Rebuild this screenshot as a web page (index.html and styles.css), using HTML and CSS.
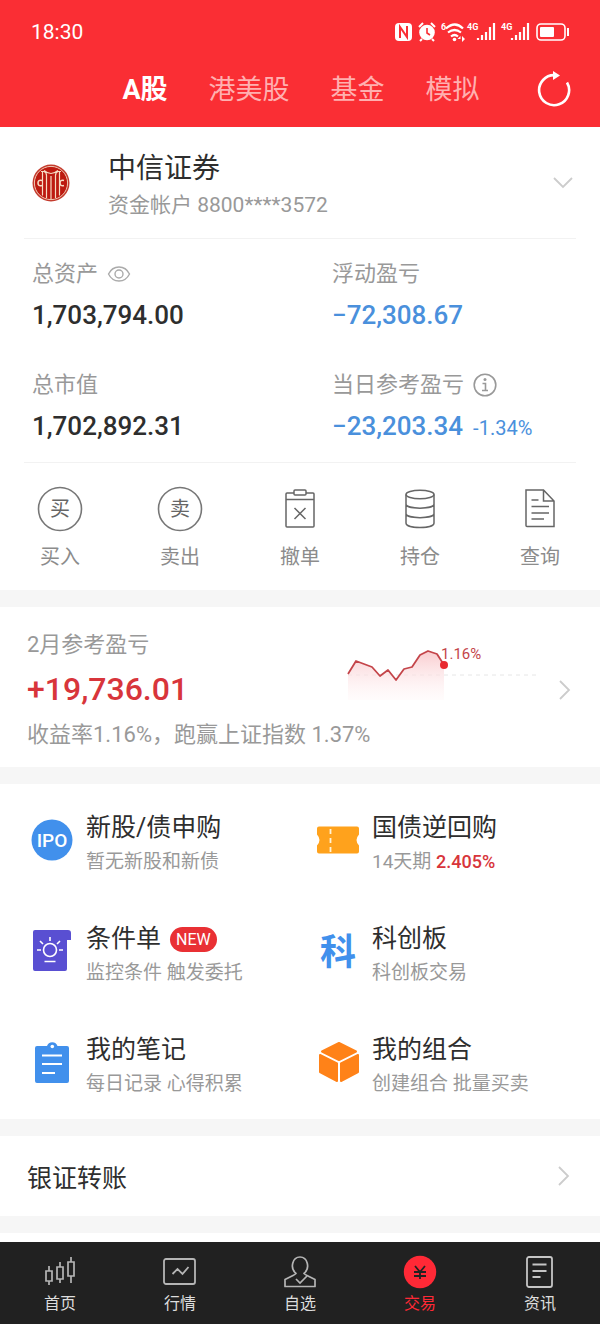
FILE: index.html
```
<!DOCTYPE html>
<html lang="zh-CN">
<head>
<meta charset="utf-8">
<meta name="viewport" content="width=device-width, initial-scale=1">
<title>交易</title>
<link rel="stylesheet" href="styles.css">
</head>
<body>
<header class="header">
  <div class="status">
    <span class="clock">18:30</span>
    <svg class="status-icons" width="178" height="24" viewBox="0 0 178 24" fill="none" stroke="#fff">
      <rect x="2" y="3" width="17" height="18" rx="4" fill="#fff" stroke="none"/>
      <path d="M7 18V7l7 10V6" stroke="#fa2e34" stroke-width="2"/>
      <circle cx="34" cy="12.500" r="7.800" fill="#fff" stroke="none"/>
      <path d="M34 8v5l3 2" stroke="#fa2e34" stroke-width="1.600"/>
      <path d="M26 7l4-4M42 7l-4-4M29 19l-2 2M39 19l2 2" stroke-width="2"/>
      <text class="net" x="48" y="10">6</text>
      <path d="M53 8.500q9-8 17 0M55 12.500q6.500-5 13 0M58 16.500q3.500-3 7 0" stroke-width="2.200"/>
      <circle cx="61.500" cy="19.500" r="1.800" fill="#fff" stroke="none"/>
      <path d="M67.500 16l-3 3h3zM69 16v6l3-3z" fill="#fff" stroke="none"/>
      <text class="net" x="74" y="10">4G</text>
      <path d="M85 20v-2M89 20v-5M93 20v-8M97 20V7M101 20V3" stroke-width="2.200"/>
      <text class="net" x="108" y="10">4G</text>
      <path d="M119 20v-2M123 20v-5M127 20v-8M131 20V7M135 20V3" stroke-width="2.200"/>
      <rect x="144" y="4" width="28" height="16" rx="4" stroke-width="1.600"/>
      <rect x="147" y="7" width="14" height="10" rx="1" fill="#fff" stroke="none"/>
      <path d="M175 8v8" stroke-width="2"/>
    </svg>
  </div>
  <div class="tabs-row">
    <nav class="tabs" aria-label="市场">
      <button class="tab tab-on" type="button">A股</button>
      <button class="tab" type="button">港美股</button>
      <button class="tab" type="button">基金</button>
      <button class="tab" type="button">模拟</button>
    </nav>
    <button class="refresh" type="button" aria-label="刷新">
      <svg width="36" height="38" viewBox="0 0 36 38" fill="none" stroke="#fff" stroke-width="2.600">
        <path d="M32 11.500A15 15 0 1 1 20 4.200"/>
        <path d="M18 0l7 4.500-7 4.500z" fill="#fff" stroke="none"/>
      </svg>
    </button>
  </div>
</header>

<main class="main">
  <section class="account">
    <button class="broker" type="button">
      <svg class="broker-logo" width="38" height="38" viewBox="0 0 38 38" fill="none">
        <circle cx="19" cy="19" r="18.500" fill="#c43a2c"/>
        <circle cx="19" cy="19" r="16.600" fill="#bd1a10" stroke="#efc9b4" stroke-width="1"/>
        <path d="M9 7.500h3q2.500 1 2.500 4V34M10.500 7.500v24M29 7.500h-3q-2.500 1-2.500 4V34M27.500 7.500v24M12 6.500q7 6 14 0M19 12v23" stroke="#f6dcc4" stroke-width="1.200"/>
        <path d="M10 16.500q-4-1-4 2.500t4 2.500M32 16.500q-4-1-4 2.500t4 2.500" stroke="#f6dcc4" stroke-width="1.600"/>
      </svg>
      <span class="broker-text">
        <span class="broker-name">中信证券</span>
        <span class="broker-no">资金帐户 8800****3572</span>
      </span>
      <svg width="20" height="12" viewBox="0 0 20 12" fill="none" stroke="#ccc" stroke-width="1.800"><path d="M1 1l9 9 9-9"/></svg>
    </button>

    <div class="stats">
      <div class="stat">
        <div class="stat-label">总资产
          <button class="icon-button" type="button" aria-label="显示或隐藏资产">
            <svg width="24" height="18" viewBox="0 0 24 18" fill="none" stroke="#aaa" stroke-width="1.400"><path d="M1.500 9Q5 2 12 2t10.500 7Q19 16 12 16T1.500 9z"/><circle cx="12" cy="9" r="4"/></svg>
          </button>
        </div>
        <div class="stat-value">1,703,794.00</div>
      </div>
      <div class="stat">
        <div class="stat-label">浮动盈亏</div>
        <div class="stat-value down">−72,308.67</div>
      </div>
      <div class="stat">
        <div class="stat-label">总市值</div>
        <div class="stat-value">1,702,892.31</div>
      </div>
      <div class="stat">
        <div class="stat-label">当日参考盈亏
          <button class="icon-button" type="button" aria-label="说明">
            <svg width="24" height="24" viewBox="0 0 24 24" fill="none" stroke="#999" stroke-width="1.600"><circle cx="12" cy="12" r="10.800"/><path d="M9.500 10.500H12.500V17M9 17.500h6"/><circle cx="12" cy="6.500" r="1.500" fill="#999" stroke="none"/></svg>
          </button>
        </div>
        <div class="stat-value down">−23,203.34<span class="rate">-1.34%</span></div>
      </div>
    </div>

    <div class="actions">
      <button class="action" type="button">
        <span class="action-icon"><svg width="46" height="46" viewBox="0 0 46 46" fill="none" stroke="#777" stroke-width="1.600"><circle cx="23" cy="23" r="21.500"/><text class="ring-text" x="23" y="30" text-anchor="middle">买</text></svg></span>买入
      </button>
      <button class="action" type="button">
        <span class="action-icon"><svg width="46" height="46" viewBox="0 0 46 46" fill="none" stroke="#777" stroke-width="1.600"><circle cx="23" cy="23" r="21.500"/><text class="ring-text" x="23" y="30" text-anchor="middle">卖</text></svg></span>卖出
      </button>
      <button class="action" type="button">
        <span class="action-icon"><svg width="32" height="40" viewBox="0 0 32 40" fill="none" stroke="#666" stroke-width="1.500"><path d="M10 4H3q-1 0-1 1v32q0 1 1 1h26q1 0 1-1V5q0-1-1-1h-7M2 10.500h28"/><rect x="10" y="1" width="12" height="5" rx="1"/><path d="M10.500 19l11 11M21.500 19l-11 11"/></svg></span>撤单
      </button>
      <button class="action" type="button">
        <span class="action-icon"><svg width="32" height="40" viewBox="0 0 32 40" fill="none" stroke="#666" stroke-width="1.500"><ellipse cx="16" cy="5.500" rx="14" ry="4.200"/><path d="M2 5.500V34c0 6 28 6 28 0V5.500M2 15c0 5.500 28 5.500 28 0M2 24.500c0 5.500 28 5.500 28 0"/></svg></span>持仓
      </button>
      <button class="action" type="button">
        <span class="action-icon"><svg width="32" height="40" viewBox="0 0 32 40" fill="none" stroke="#666" stroke-width="1.500"><path d="M2 1h17.500L30 12v25.500H3q-1 0-1-1V2zM19.500 1v11H30M7.500 11h7M7.500 17.500h17.500M7.500 24h17.500M7.500 30h12.500"/></svg></span>查询
      </button>
    </div>
  </section>

  <a class="month" href="#month">
    <span class="month-body">
      <span class="month-top">
        <span class="month-figures">
          <span class="month-label">2月参考盈亏</span>
          <span class="month-value">+19,736.01</span>
        </span>
        <svg class="chart" width="200" height="70" viewBox="0 0 200 70" fill="none">
          <defs><linearGradient id="area" x1="0" y1="0" x2="0" y2="1"><stop offset="0" stop-color="#f9cccf"/><stop offset="1" stop-color="#fff5f6" stop-opacity=".3"/></linearGradient></defs>
          <path d="M8 35h190" stroke="#e6e6e6" stroke-dasharray="4 4"/>
          <path d="M8 34l8-13 8 3 8 3 8 9 8-6 8 10 8-11 8-2 8-12 8-4 9 3 7 11v35H8z" fill="url(#area)"/>
          <path d="M8 34l8-13 8 3 8 3 8 9 8-6 8 10 8-11 8-2 8-12 8-4 9 3 7 11" stroke="#c4454a" stroke-width="1.800" stroke-linejoin="round"/>
          <circle cx="104" cy="25" r="4" fill="#e8292f"/>
          <text class="chart-text" x="101" y="19">1.16%</text>
        </svg>
      </span>
      <span class="month-note">收益率1.16%，跑赢上证指数 1.37%</span>
    </span>
    <svg width="12" height="20" viewBox="0 0 12 20" fill="none" stroke="#ccc" stroke-width="1.800"><path d="M1 1l9 9-9 9"/></svg>
  </a>

  <section class="tiles">
    <a class="tile" href="#ipo">
      <svg class="tile-icon" width="48" height="48" viewBox="0 0 48 48"><circle cx="24" cy="24" r="20.500" fill="#4190ec"/><text class="ipo" x="24" y="31" text-anchor="middle">IPO</text></svg>
      <span class="tile-text"><span class="tile-title">新股/债申购</span><span class="tile-note">暂无新股和新债</span></span>
    </a>
    <a class="tile" href="#repo">
      <svg class="tile-icon" width="48" height="48" viewBox="0 0 48 48"><path d="M5 10.500h38q2 0 2 2v6q-5 5.500 0 11v6q0 2-2 2H5q-2 0-2-2v-6q5-5.500 0-11v-6q0-2 2-2z" fill="#ffa21c"/><path d="M16.500 13v23" stroke="#fff3d6" stroke-width="1.800" stroke-dasharray="5 4"/></svg>
      <span class="tile-text"><span class="tile-title">国债逆回购</span><span class="tile-note">14天期 <b class="yield">2.405%</b></span></span>
    </a>
    <a class="tile" href="#conditional">
      <svg class="tile-icon" width="48" height="48" viewBox="0 0 48 48" fill="none" stroke="#fff" stroke-width="1.600"><path d="M7 3h33q3 0 3 3v7h-4v29q0 2-2 2H7q-2 0-2-2V5q0-2 2-2z" fill="#594fd2" stroke="none"/><circle cx="22" cy="23" r="6.500"/><path d="M22 10v4M12 14l3 3M32 14l-3 3M9 23h4M31 23h4M16.500 34.500h11"/></svg>
      <span class="tile-text"><span class="tile-title">条件单<span class="new">NEW</span></span><span class="tile-note">监控条件 触发委托</span></span>
    </a>
    <a class="tile" href="#star">
      <svg class="tile-icon" width="48" height="48" viewBox="0 0 48 48"><text class="star" x="24" y="38" text-anchor="middle">科</text></svg>
      <span class="tile-text"><span class="tile-title">科创板</span><span class="tile-note">科创板交易</span></span>
    </a>
    <a class="tile" href="#notes">
      <svg class="tile-icon" width="48" height="48" viewBox="0 0 48 48"><path d="M9 8h10a5.500 5.500 0 0 1 10.500 0H39q2 0 2 2V43q0 2-2 2H9q-2 0-2-2V10q0-2 2-2z" fill="#4190ec"/><circle cx="24.300" cy="8.500" r="1.800" fill="#fff"/><path d="M14 17.500h20M14 26h20M14 35h13" stroke="#fff" stroke-width="1.800"/></svg>
      <span class="tile-text"><span class="tile-title">我的笔记</span><span class="tile-note">每日记录 心得积累</span></span>
    </a>
    <a class="tile" href="#portfolio">
      <svg class="tile-icon" width="48" height="48" viewBox="0 0 48 48" fill="#ff8218" stroke="#ff8218" stroke-width="2" stroke-linejoin="round"><path d="M25 5l17 8.500L25 22 8 13.500zM6 17l17 8.500V43L6 34zM44 17l-17 8.500V43l17-9z"/></svg>
      <span class="tile-text"><span class="tile-title">我的组合</span><span class="tile-note">创建组合 批量买卖</span></span>
    </a>
  </section>

  <a class="transfer" href="#transfer">银证转账
    <svg width="12" height="20" viewBox="0 0 12 20" fill="none" stroke="#ccc" stroke-width="1.800"><path d="M1 1l9 9-9 9"/></svg>
  </a>
  <div class="next"></div>
</main>

<nav class="bottom" aria-label="主导航">
  <a class="bottom-item" href="#home">
    <svg width="36" height="36" viewBox="0 0 36 36" fill="none" stroke="#b5b5b5" stroke-width="1.700"><path d="M4 17h6v10H4zM15 13h6v12h-6zM26 8h6v14h-6zM7 12v5M7 27v4M18 8v5M18 25v4M29 3v5M29 22v7"/></svg>首页
  </a>
  <a class="bottom-item" href="#market">
    <svg width="36" height="36" viewBox="0 0 36 36" fill="none" stroke="#b5b5b5" stroke-width="1.800"><rect x="2" y="5" width="31" height="25" rx="2"/><path d="M10.500 20l5-5 5 5 6-7"/></svg>行情
  </a>
  <a class="bottom-item" href="#watch">
    <svg width="36" height="36" viewBox="0 0 36 36" fill="none" stroke="#b5b5b5" stroke-width="1.700"><path d="M14 19.500C7.500 14 10.500 3 18 3s10.500 11 4 16.500q1 1 3 2l8 4v7H3v-7l8-4q2-1 3-2z" stroke-linejoin="round"/><path d="M14 25l4 4 7-7"/></svg>自选
  </a>
  <a class="bottom-item bottom-on" href="#trade" aria-current="page">
    <svg width="36" height="36" viewBox="0 0 36 36" fill="none"><circle cx="18" cy="18" r="16.200" fill="#ff2936"/><path d="M13 12l5 6 5-6M18 18v7M12 18h12M12 22h12" stroke="#222" stroke-width="1.800"/></svg>交易
  </a>
  <a class="bottom-item" href="#news">
    <svg width="36" height="36" viewBox="0 0 36 36" fill="none" stroke="#c5c5c5" stroke-width="1.800"><rect x="5" y="3" width="25" height="30" rx="2"/><path d="M10.500 10.500h14M10.500 17h14M10.500 23h8"/></svg>资讯
  </a>
</nav>
</body>
</html>
```

FILE: styles.css
```
* {
  box-sizing: border-box;
}

body {
  margin: 0;
  background: #f6f6f6;
  color: #2e2e2e;
  font-family: Roboto, "Noto Sans CJK SC", sans-serif;
}

button {
  margin: 0;
  padding: 0;
  border: 0;
  background: none;
  color: inherit;
  font: inherit;
}

a {
  color: inherit;
  text-decoration: none;
}

svg {
  display: block;
  flex: none;
}

.header {
  padding: 16px 29px 11px 31px;
  background: #fa2e34;
  color: #fff;
}

.status {
  display: flex;
  align-items: center;
  justify-content: space-between;
  height: 32px;
}

.clock {
  font-size: 21px;
}

.net {
  fill: #fff;
  stroke: none;
  font-size: 9px;
  font-weight: 700;
}

.tabs-row {
  display: grid;
  grid-template-columns: 1fr auto 1fr;
  align-items: center;
  height: 52px;
  margin-top: 16px;
}

.tabs {
  display: flex;
  grid-column: 2;
  gap: 41px;
}

.tab {
  color: #ffb0b0;
  font-size: 27px;
  line-height: 44px;
}

.tab-on {
  color: #fff;
  font-weight: 700;
}

.refresh {
  justify-self: end;
}

.main {
  display: flex;
  flex-direction: column;
  gap: 17px;
}

.account,
.month,
.tiles,
.transfer,
.next {
  background: #fff;
}

.broker {
  display: flex;
  align-items: center;
  width: calc(100% - 48px);
  height: 112px;
  margin: 0 24px;
  padding: 0 3px 0 8px;
  border-bottom: 1px solid #f2f2f2;
  text-align: left;
}

.broker-text {
  display: flex;
  flex: 1;
  flex-direction: column;
  margin-left: 38px;
  padding-top: 4px;
}

.broker-name {
  font-size: 28px;
  line-height: 40px;
}

.broker-no {
  color: #999;
  font-size: 21px;
  line-height: 32px;
}

.stats {
  display: grid;
  grid-template-columns: 1fr 1fr;
  row-gap: 35px;
  padding: 20px 0 14px;
}

.stat {
  padding-left: 32px;
}

.stat-label {
  display: flex;
  align-items: center;
  gap: 9px;
  color: #999;
  font-size: 22px;
  line-height: 30px;
}

.stat-value {
  margin-top: 6px;
  font-size: 26px;
  font-weight: 500;
  line-height: 40px;
}

.down {
  color: #4a90dc;
}

.rate {
  margin-left: 10px;
  font-size: 20px;
  font-weight: 400;
}

.actions {
  display: grid;
  grid-template-columns: repeat(5, 1fr);
  padding: 22px 0 18px;
  background: linear-gradient(#f2f2f2, #f2f2f2) center top / calc(100% - 48px) 1px no-repeat;
}

.action {
  display: flex;
  flex-direction: column;
  align-items: center;
  gap: 8px;
  color: #8c8c8c;
  font-size: 20px;
  line-height: 30px;
}

.action-icon {
  display: grid;
  place-items: center;
  height: 50px;
}

.ring-text {
  fill: #666;
  stroke: none;
  font-size: 20px;
}

.month {
  display: flex;
  align-items: center;
  height: 160px;
  padding: 6px 29px 0 27px;
}

.month-body {
  display: flex;
  flex: 1;
  flex-direction: column;
}

.month-top {
  display: flex;
  align-items: center;
  justify-content: space-between;
  padding-right: 19px;
}

.month-figures {
  display: flex;
  flex-direction: column;
}

.month-label,
.month-note {
  color: #999;
  font-size: 22px;
  line-height: 30px;
}

.month-value {
  margin: 8px 0 10px;
  color: #d8353b;
  font-size: 32px;
  font-weight: 500;
  line-height: 42px;
}

.chart-text {
  fill: #c4454a;
  font-size: 15px;
}

.tiles {
  display: grid;
  grid-template-columns: 1fr 1fr;
  row-gap: 45px;
  padding: 26px 0 21px 28px;
}

.tile {
  display: flex;
  align-items: flex-start;
  gap: 10px;
}

.tile-icon {
  margin-top: 6px;
}

.tile-text {
  display: flex;
  flex-direction: column;
  gap: 2px;
}

.tile-title {
  display: flex;
  align-items: center;
  font-size: 25px;
  line-height: 36px;
}

.tile-note {
  color: #999;
  font-size: 19px;
  line-height: 28px;
}

.yield {
  color: #d8353b;
  font-size: 18px;
  font-weight: 500;
}

.new {
  margin-left: 9px;
  padding: 0 6px;
  border-radius: 13px;
  background: #e93034;
  color: #fff;
  font-size: 16px;
  line-height: 25px;
}

.ipo {
  fill: #fff;
  font-size: 19px;
  font-weight: 500;
}

.star {
  fill: #4190ec;
  font-size: 36px;
  font-weight: 700;
}

.transfer {
  display: flex;
  align-items: center;
  justify-content: space-between;
  height: 80px;
  padding: 0 30px 0 27px;
  font-size: 25px;
}

.next {
  height: 9px;
}

.bottom {
  display: grid;
  grid-template-columns: repeat(5, 1fr);
  padding: 12px 0 8px;
  background: #212121;
}

.bottom-item {
  display: flex;
  flex-direction: column;
  align-items: center;
  gap: 2px;
  color: #ddd;
  font-size: 16px;
  line-height: 24px;
}

.bottom-on {
  color: #ff2936;
}
```
